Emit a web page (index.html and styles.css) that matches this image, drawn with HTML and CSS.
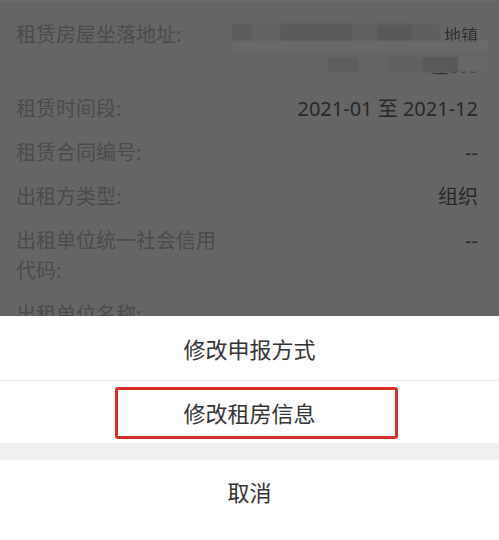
FILE: index.html
```html
<!DOCTYPE html>
<html lang="zh-CN">
<head>
<meta charset="utf-8">
<title>租房信息</title>
<link rel="stylesheet" href="styles.css">
</head>
<body>
<div class="screen">
  <div class="topband"></div>
  <div class="list">
    <div class="row">
      <div class="label">租赁房屋坐落地址:</div>
      <div class="value addr">
        <div class="addr-line">
          <div class="addr-box w1">
            <span class="addr-tail">地镇</span>
            <span class="mosaic m1"></span>
            <span class="mosaic band"></span>
          </div>
        </div>
        <div class="addr-line">
          <div class="addr-box w2">
            <span class="addr-tail">座000</span>
            <span class="mosaic m2"></span>
          </div>
        </div>
      </div>
    </div>
    <div class="row">
      <div class="label">租赁时间段:</div>
      <div class="value">2021-01 至 2021-12</div>
    </div>
    <div class="row">
      <div class="label">租赁合同编号:</div>
      <div class="value">--</div>
    </div>
    <div class="row">
      <div class="label">出租方类型:</div>
      <div class="value">组织</div>
    </div>
    <div class="row">
      <div class="label">出租单位统一社会信用代码:</div>
      <div class="value">--</div>
    </div>
    <div class="row">
      <div class="label">出租单位名称:</div>
      <div class="value"></div>
    </div>
  </div>

  <div class="sheet">
    <div class="sheet-item first">修改申报方式</div>
    <div class="sheet-item second">
      修改租房信息
      <span class="highlight"></span>
    </div>
    <div class="sheet-gap"></div>
    <div class="sheet-item cancel">取消</div>
    <div class="sheet-safe"></div>
  </div>
</div>
</body>
</html>
```

FILE: styles.css
```css
* { box-sizing: border-box; }
html, body {
  margin: 0;
  padding: 0;
}
body {
  width: 499px;
  height: 540px;
  overflow: hidden;
  background: #666;
  font-family: "Noto Sans", "Noto Sans CJK SC", sans-serif;
}
.screen {
  position: relative;
  width: 499px;
  height: 540px;
  background: #666666;
  overflow: hidden;
}
.topband {
  height: 4px;
  background: #6a6a6a;
  border-bottom: 1px solid #626262;
}
.list {
  padding-top: 9px;
}
.row {
  display: flex;
  align-items: flex-start;
  padding: 7px 21px 7px 16px;
  font-size: 20px;
  line-height: 30px;
}
.label {
  width: 210px;
  flex: none;
  color: #4b4b4b;
}
.value {
  flex: 1;
  text-align: right;
  color: #262626;
}
.addr {
  display: flex;
  flex-direction: column;
  align-items: flex-end;
}
.addr-line {
  height: 30px;
  display: flex;
  justify-content: flex-end;
}
.addr-box {
  position: relative;
  height: 30px;
  text-align: right;
}
.addr-box.w1 { width: 246px; }
.addr-box.w2 { width: 150px; margin-top: 1px; }
.addr-tail {
  font-size: 17px;
  line-height: 30px;
  color: #2e2e2e;
  filter: blur(0.6px);
}
.mosaic {
  position: absolute;
  display: block;
  filter: blur(1px);
}
.m1 {
  left: 0;
  top: 4px;
  width: 208px;
  height: 17px;
  background: linear-gradient(90deg,
    #5c5c5c 0 20px, #636363 20px 48px, #5a5a5a 48px 120px,
    #616161 120px 145px, #585858 145px 180px, #5f5f5f 180px 208px);
}
.band {
  left: 0;
  top: 21px;
  width: 255px;
  height: 10px;
  background: #6a6a6a;
}
.m2 {
  left: 0;
  top: 6px;
  width: 159px;
  height: 15px;
  background: linear-gradient(90deg,
    #5d5d5d 0 30px, #646464 30px 60px, #616161 60px 95px,
    #595959 95px 130px, #686868 130px 159px);
}

.sheet {
  position: absolute;
  left: 0;
  right: 0;
  top: 316px;
  bottom: 0;
  background: #fff;
  display: flex;
  flex-direction: column;
  font-family: "Noto Sans CJK SC", sans-serif;
  color: #333;
  font-size: 22px;
}
.sheet-item {
  display: flex;
  align-items: center;
  justify-content: center;
  background: #fff;
}
.sheet-item.first {
  height: 65px;
  border-bottom: 1px solid #ebebeb;
}
.sheet-item.second {
  position: relative;
  height: 62px;
}
.highlight {
  position: absolute;
  left: 115px;
  top: 6px;
  width: 283px;
  height: 52px;
  border: 3px solid #d5302a;
  border-radius: 3px;
}
.sheet-gap {
  height: 17px;
  background: #f0f0f0;
}
.sheet-item.cancel {
  height: 62px;
}
.sheet-safe {
  flex: 1;
  background: #fff;
}
```
